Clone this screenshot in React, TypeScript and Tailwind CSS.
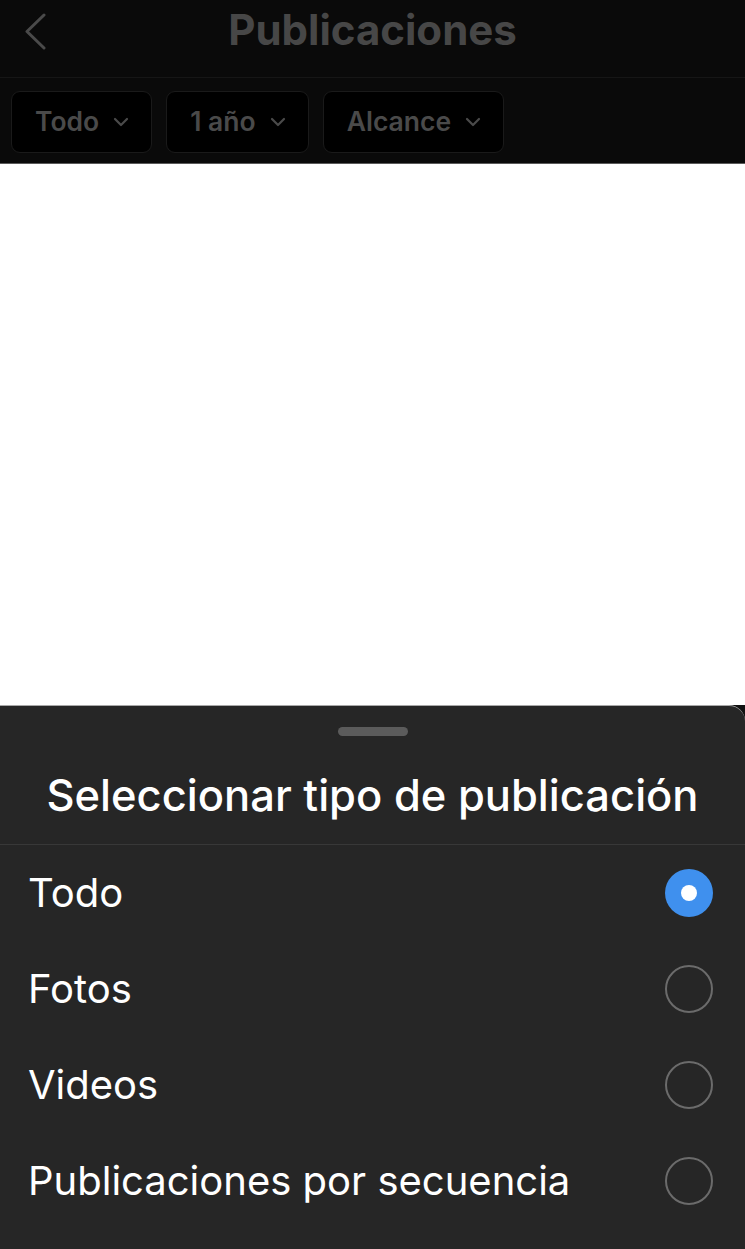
const filters = ["Todo", "1 año", "Alcance"];

const options = [
  { label: "Todo", selected: true },
  { label: "Fotos", selected: false },
  { label: "Videos", selected: false },
  { label: "Publicaciones por secuencia", selected: false },
];

function Radio({ selected }: { selected: boolean }) {
  if (selected) {
    return (
      <div className="flex h-[48px] w-[48px] items-center justify-center rounded-full bg-[#3f90ee]">
        <div className="h-[16px] w-[16px] rounded-full bg-white" />
      </div>
    );
  }
  return <div className="h-[48px] w-[48px] rounded-full border-[2px] border-[#6b6b6b]" />;
}

function SmallChevron() {
  return (
    <svg width="16" height="10" viewBox="0 0 16 10" fill="none" className="shrink-0">
      <path d="M2 2l6 6 6-6" stroke="#4a4a4a" strokeWidth="2.2" strokeLinecap="round" strokeLinejoin="round" />
    </svg>
  );
}

export default function App() {
  return (
    <div
      className="flex h-[1249px] w-[745px] flex-col overflow-hidden bg-[#0a0a0a]"
      style={{ fontFamily: "Inter, 'Noto Sans', sans-serif" }}
    >
      {/* Dimmed header */}
      <div className="relative flex h-[78px] shrink-0 items-start justify-center border-b border-[#161616] pt-[4px]">
        <svg
          className="absolute left-[22px] top-[12px]"
          width="26"
          height="38"
          viewBox="0 0 26 38"
          fill="none"
        >
          <path d="M22 3L5 19.5 22 36" stroke="#4a4a4a" strokeWidth="3" strokeLinecap="round" strokeLinejoin="round" />
        </svg>
        <h1 className="text-[42px] font-bold leading-[52px] text-[#474747]">Publicaciones</h1>
      </div>

      {/* Filters */}
      <div className="flex h-[85px] shrink-0 items-center gap-[14px] px-[11px] pt-[3px]">
        {filters.map((f) => (
          <div
            key={f}
            className="flex h-[62px] items-center gap-[14px] rounded-[9px] border border-[#1a1a1a] bg-black pl-[23px] pr-[22px]"
          >
            <span className="text-[26.5px] font-semibold text-[#4a4a4a]">{f}</span>
            <SmallChevron />
          </div>
        ))}
      </div>

      {/* Content (behind overlay) */}
      <div className="h-[542px] shrink-0 border-t border-[#5a5a5a] bg-white" />

      {/* Bottom sheet */}
      <div className="flex-1 bg-[#111111]">
        <div className="h-full rounded-tr-[16px] border-t border-[#a8a8a8] bg-[#262626]">
          <div className="flex justify-center pt-[21px]">
            <div className="h-[9px] w-[70px] rounded-full bg-[#5b5b5b]" />
          </div>
          <h2 className="mt-[31px] text-center text-[43.5px] font-medium leading-[56px] text-white">
            Seleccionar tipo de publicación
          </h2>
          <div className="mt-[21px] border-t border-[#383838]" />
          <div className="flex flex-col">
            {options.map((o) => (
              <div key={o.label} className="flex h-[96px] items-center justify-between pl-[28px] pr-[32px]">
                <span className="text-[40px] font-normal text-white">{o.label}</span>
                <Radio selected={o.selected} />
              </div>
            ))}
          </div>
        </div>
      </div>
    </div>
  );
}
